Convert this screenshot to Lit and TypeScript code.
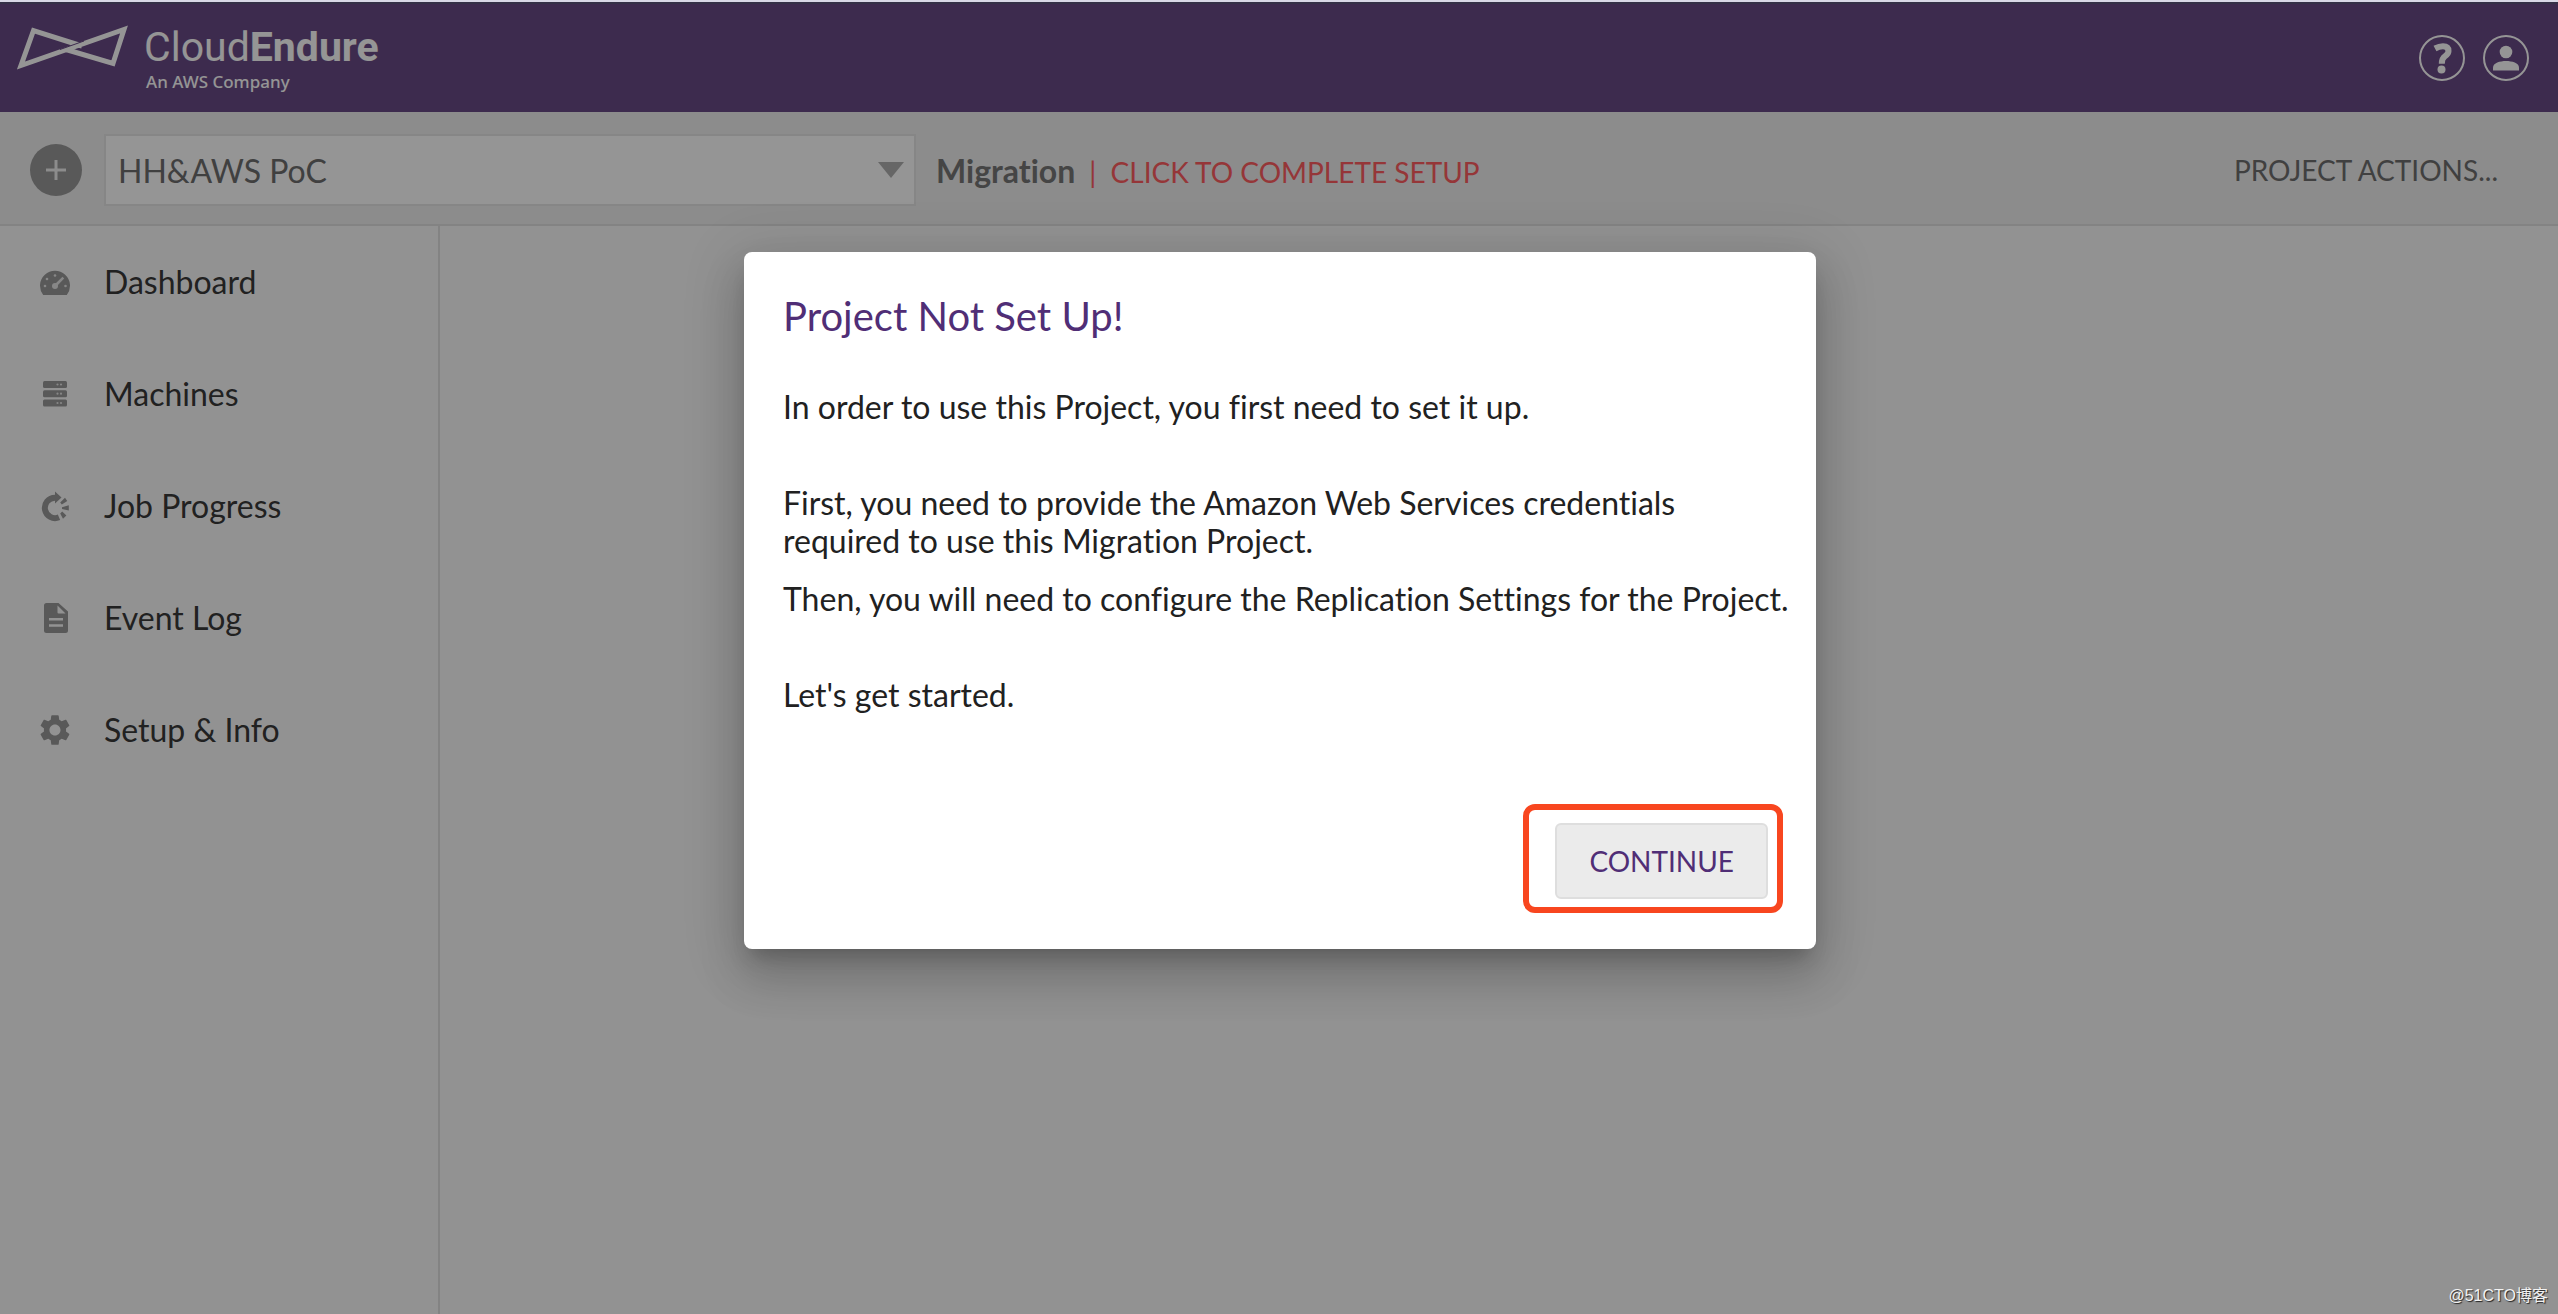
import { LitElement, html, svg, css } from "lit";
import { customElement } from "lit/decorators.js";

const icons = {
  dashboard: svg`
    <path fill="currentColor" d="M4.2 29A15 15 0 1 1 27.8 29Z"/>
    <g fill="#e4e4e4">
      <circle cx="6" cy="20" r="1.3"/><circle cx="8" cy="13" r="1.3"/>
      <circle cx="16" cy="9.500" r="1.3"/><circle cx="26.500" cy="20" r="1.3"/>
      <circle cx="16" cy="20" r="3"/>
      <path d="M15.500 18.500L23.500 10.800L25.200 12.500L17.500 20.500Z"/>
    </g>`,
  machines: svg`
    <g fill="currentColor">
      <rect x="4" y="3" width="24" height="7" rx="1.500"/>
      <rect x="4" y="12.200" width="24" height="7" rx="1.500"/>
      <rect x="4" y="21.500" width="24" height="7" rx="1.500"/>
    </g>
    <g fill="#e4e4e4">
      <circle cx="18.500" cy="6.500" r="1.1"/><circle cx="22" cy="6.500" r="1.1"/>
      <circle cx="18.500" cy="15.700" r="1.1"/><circle cx="22" cy="15.700" r="1.1"/>
      <circle cx="18.500" cy="25" r="1.1"/><circle cx="22" cy="25" r="1.1"/>
    </g>`,
  jobs: svg`
    <path fill="none" stroke="currentColor" stroke-width="6" d="M16 7.700A10.200 10.200 0 1 0 20 27.300"/>
    <path fill="currentColor" d="M16 1.500L22.500 7.500L16 13.500Z"/>
    <path fill="currentColor" d="M21.200 12.600L26 7.800L28.300 11L22.800 14.600Z
      M23 17.300L29.800 15.300V20.500L23 18.900Z M21.200 23.600L23.200 21.600L27.400 25.600L24 28.800Z"/>`,
  log: svg`
    <path fill="currentColor" fill-rule="evenodd" d="M7.500 1H19.500L29 9.500V28.500A2.500 2.500 0 0 1 26.500 31H7.500
      A2.500 2.500 0 0 1 5 28.500V3.500A2.500 2.500 0 0 1 7.500 1Z
      M18.500 3.500V10.500Q18.500 11.500 19.500 11.500H26.500Z
      M10 16V18.600H24V16Z M10 22.200V24.800H24V22.200Z"/>`,
  setup: svg`
    <path fill="currentColor" transform="translate(-2.500 -2.500) scale(1.54)" d="M19.140 12.940c.040-.300.060-.610.060-.940
      0-.320-.020-.640-.070-.940l2.030-1.580c.180-.140.230-.410.120-.610l-1.920-3.320c-.120-.220-.370-.290-.590-.220
      l-2.390.960c-.500-.380-1.030-.700-1.620-.940l-.360-2.540c-.040-.240-.240-.410-.480-.410h-3.840c-.240 0-.430.170-.470.410
      l-.360 2.540c-.590.240-1.130.570-1.620.940l-2.390-.960c-.220-.080-.470 0-.590.220L2.740 8.870c-.120.210-.080.470.120.610
      l2.030 1.580c-.050.300-.090.630-.090.940s.020.640.070.940l-2.030 1.580c-.180.140-.230.410-.120.610l1.920 3.320
      c.120.220.370.290.590.220l2.390-.960c.500.380 1.030.700 1.620.940l.360 2.540c.050.240.240.410.480.410h3.840
      c.240 0 .440-.170.470-.410l.360-2.540c.590-.240 1.130-.560 1.620-.940l2.390.960c.220.080.470 0 .590-.220l1.920-3.320
      c.120-.220.070-.470-.120-.610l-2.010-1.580zM12 15.600c-1.980 0-3.600-1.620-3.600-3.600s1.620-3.600 3.600-3.600
      3.600 1.620 3.600 3.600-1.620 3.600-3.600 3.600z"/>`,
};

const navItems = [
  { label: "Dashboard", icon: icons.dashboard },
  { label: "Machines", icon: icons.machines },
  { label: "Job Progress", icon: icons.jobs },
  { label: "Event Log", icon: icons.log },
  { label: "Setup & Info", icon: icons.setup },
];

@customElement("ce-header")
class CeHeader extends LitElement {
  static styles = css`
    :host {
      display: flex;
      justify-content: space-between;
      height: 110px;
      box-sizing: border-box;
      padding: 0 28px 0 16px;
      background: #573478;
      border-top: 2px solid #47406a;
      color: #fff;
    }
    .brand {
      display: flex;
      align-items: flex-start;
      gap: 14px;
      padding-top: 18px;
      color: #fff;
      text-decoration: none;
    }
    .mark {
      width: 114px;
      height: 48px;
    }
    .name {
      font: 400 41px/51px Roboto, sans-serif;
    }
    .name b {
      font-weight: 700;
    }
    .tag {
      padding-left: 2px;
      font: 500 17px/18px "Noto Sans", sans-serif;
    }
    .tools {
      display: flex;
      gap: 16px;
      padding-top: 30px;
    }
    .tool {
      width: 48px;
      height: 48px;
      padding: 0;
      border: 0;
      background: none;
      color: inherit;
    }
    svg {
      display: block;
    }
    .words {
      display: flex;
      flex-direction: column;
    }
  `;
  render() {
    return html`
      <a class="brand" href="#">
        <svg class="mark" viewBox="16 22 114 48" aria-hidden="true">
          <path fill="none" stroke="#fff" stroke-width="5" stroke-miterlimit="8"
            d="M82 46L33.500 30.500L21 65.500L124 29.500L113 63.500L66 49.500"/>
          <path stroke="#573478" stroke-width="1" d="M60 49.500L84 41"/>
        </svg>
        <span class="words">
          <span class="name">Cloud<b>Endure</b></span>
          <span class="tag">An AWS Company</span>
        </span>
      </a>
      <div class="tools">
        <button class="tool" aria-label="Help">
          <svg viewBox="0 0 48 48" fill="none" stroke="#fff">
            <circle cx="24" cy="24" r="22" stroke-width="2"/>
            <path stroke-width="6" d="M17 14.500Q21 12.300 25 12.300Q30.500 12.300 30.500 17Q30.500 20 27 22.200Q23.800 24.300 23.800 29.800"/>
            <circle cx="23.500" cy="35.500" r="4" fill="#fff" stroke="none"/>
          </svg>
        </button>
        <button class="tool" aria-label="Account">
          <svg viewBox="0 0 48 48">
            <circle cx="24" cy="24" r="22" stroke-width="2" fill="none" stroke="#fff"/>
            <circle cx="24" cy="18" r="6.300" fill="#fff"/>
            <path fill="#fff" d="M11 36.500V33.500C11 29 18 27 24 27S37 29 37 33.500V36.500Z"/>
          </svg>
        </button>
      </div>
    `;
  }
}

@customElement("ce-toolbar")
class CeToolbar extends LitElement {
  static styles = css`
    :host {
      display: flex;
      align-items: center;
      height: 114px;
      box-sizing: border-box;
      padding: 4px 60px 0 30px;
      background: #ededed;
      border-bottom: 2px solid #dcdcdc;
      color: #666;
      font-size: 32px;
    }
    .add {
      width: 52px;
      height: 52px;
      flex: none;
      padding: 0;
      border: 0;
      border-radius: 50%;
      background: #8c8c8c;
      margin-right: 22px;
    }
    .add svg {
      display: block;
      margin: auto;
    }
    .picker {
      flex: 0 1 812px;
      display: grid;
      align-items: center;
    }
    .picker > * {
      grid-area: 1 / 1;
    }
    .project {
      appearance: none;
      width: 100%;
      height: 72px;
      box-sizing: border-box;
      padding: 0 60px 0 12px;
      border: 2px solid #e2e2e2;
      border-radius: 0;
      background: #fff;
      color: #5c5c5c;
      font: inherit;
    }
    .arrow {
      justify-self: end;
      margin-right: 12px;
      pointer-events: none;
    }
    .kind {
      margin-left: 20px;
      font-weight: 700;
    }
    .setup {
      margin: 4px 0 0 14px;
      color: #ff4a4e;
      font-size: 28px;
      text-decoration: none;
      white-space: pre;
    }
    .actions {
      margin-left: auto;
      padding: 0;
      border: 0;
      background: none;
      color: #5c5c5c;
      font: inherit;
      font-size: 28px;
    }
  `;
  render() {
    return html`
      <button class="add" aria-label="Add project">
        <svg width="22" height="22" viewBox="0 0 22 22" aria-hidden="true">
          <path stroke="#eee" stroke-width="3" d="M11 1V21M1 11H21"/>
        </svg>
      </button>
      <div class="picker">
        <select class="project" aria-label="Project">
          <option>HH&amp;AWS PoC</option>
        </select>
        <svg class="arrow" width="26" height="16" viewBox="0 0 26 16" aria-hidden="true">
          <path fill="#a6a6a6" d="M0 0H26L13 16Z"/>
        </svg>
      </div>
      <span class="kind">Migration</span>
      <a class="setup" href="#">|  CLICK TO COMPLETE SETUP</a>
      <button class="actions">PROJECT ACTIONS...</button>
    `;
  }
}

@customElement("ce-sidebar")
class CeSidebar extends LitElement {
  static styles = css`
    :host {
      display: block;
      flex: 0 0 440px;
      box-sizing: border-box;
      border-right: 2px solid #dcdcdc;
    }
    .item {
      display: flex;
      align-items: center;
      gap: 33px;
      height: 112px;
      padding-left: 39px;
      color: #212121;
      font-size: 32px;
      text-decoration: none;
    }
    .label {
      padding-bottom: 2px;
    }
    .icon {
      width: 32px;
      height: 32px;
      color: #8c8c8c;
    }
  `;
  render() {
    return html`<nav>
      ${navItems.map(
        (item) => html`<a class="item" href="#">
          <svg class="icon" viewBox="0 0 32 32" aria-hidden="true">${item.icon}</svg>
          <span class="label">${item.label}</span>
        </a>`,
      )}
    </nav>`;
  }
}

@customElement("ce-setup-dialog")
class CeSetupDialog extends LitElement {
  static styles = css`
    :host {
      display: block;
      width: 1072px;
      max-width: 90%;
    }
    .card {
      box-sizing: border-box;
      padding: 40px 16px 50px 39px;
      border-radius: 8px;
      background: #fff;
      color: #212121;
      font-size: 32px;
      line-height: 38px;
      box-shadow: 0 14px 18px -8px rgba(0, 0, 0, 0.2), 0 28px 44px 4px rgba(0, 0, 0, 0.14),
        0 10px 56px 10px rgba(0, 0, 0, 0.12);
    }
    h2 {
      margin: 0 0 48px;
      color: #502e76;
      font-size: 40px;
      font-weight: 400;
      line-height: 48px;
    }
    .body {
      display: flex;
      flex-direction: column;
      gap: 58px;
    }
    .steps {
      display: flex;
      flex-direction: column;
      gap: 20px;
    }
    p {
      margin: 0;
    }
    .footer {
      display: flex;
      justify-content: flex-end;
      margin-top: 109px;
      padding-right: 32px;
    }
    .focus {
      position: relative;
      display: flex;
    }
    .focus::after {
      content: "";
      position: absolute;
      inset: -19px -15px -14px -32px;
      border: 6px solid #f8461f;
      border-radius: 12px;
      pointer-events: none;
    }
    .continue {
      height: 76px;
      padding: 0 32px;
      border: 2px solid #dedede;
      border-radius: 6px;
      background: #ebebeb;
      color: #502e76;
      font: inherit;
      font-size: 28px;
    }
  `;
  render() {
    return html`
      <div class="card" role="dialog" aria-modal="true" aria-labelledby="title">
        <h2 id="title">Project Not Set Up!</h2>
        <div class="body">
          <p>In order to use this Project, you first need to set it up.</p>
          <div class="steps">
            <p>First, you need to provide the Amazon Web Services credentials required to use this Migration Project.</p>
            <p>Then, you will need to configure the Replication Settings for the Project.</p>
          </div>
          <p>Let's get started.</p>
        </div>
        <div class="footer">
          <span class="focus"><button class="continue">CONTINUE</button></span>
        </div>
      </div>
    `;
  }
}

@customElement("app-root")
class AppRoot extends LitElement {
  static styles = css`
    :host {
      display: block;
      font-family: Lato, "Noto Sans", sans-serif;
      font-variant-ligatures: no-common-ligatures;
    }
    .page {
      position: relative;
      display: flex;
      flex-direction: column;
      min-height: 100vh;
      box-sizing: border-box;
      border-top: 2px solid #d9d8e6;
      background: #fafafa;
    }
    .main {
      display: flex;
      flex: 1;
    }
    .backdrop {
      position: absolute;
      inset: 0;
      display: flex;
      justify-content: center;
      align-items: flex-start;
      padding: 250px 0 0 2px;
      background: rgba(33, 33, 33, 0.48);
    }
    .credit {
      position: absolute;
      right: 10px;
      bottom: 6px;
      color: #f2f2f2;
      font: 16px/24px "Liberation Sans", "Noto Sans CJK SC", sans-serif;
      text-shadow: 1px 1px 1px #222;
    }
  `;
  render() {
    return html`
      <div class="page">
        <ce-header></ce-header>
        <ce-toolbar></ce-toolbar>
        <div class="main">
          <ce-sidebar></ce-sidebar>
          <main></main>
        </div>
        <div class="backdrop"><ce-setup-dialog></ce-setup-dialog></div>
        <div class="credit">@51CTO博客</div>
      </div>
    `;
  }
}
